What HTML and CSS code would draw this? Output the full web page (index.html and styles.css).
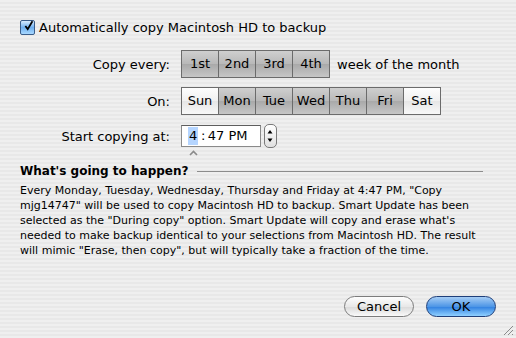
FILE: index.html
```html
<!DOCTYPE html>
<html lang="en">
<head>
  <meta charset="UTF-8" />
  <title>Backup Schedule</title>
  <link rel="stylesheet" href="styles.css">
</head>
<body>
  <div class="dialog">
    <label class="check-row">
      <span class="checkbox">
        <svg width="14" height="14" viewBox="0 0 14 14">
          <path d="M3 7 L6 11 L12 1" fill="none" stroke="#000" stroke-width="2.2"/>
        </svg>
      </span>
      Automatically copy Macintosh HD to backup
    </label>

    <div class="form">
      <div class="label">Copy every:</div>
      <div class="control">
        <div class="segments">
          <span class="seg on">1st</span>
          <span class="seg on">2nd</span>
          <span class="seg on">3rd</span>
          <span class="seg on">4th</span>
        </div>
        <span class="after">week of the month</span>
      </div>

      <div class="label">On:</div>
      <div class="control">
        <div class="segments">
          <span class="seg">Sun</span>
          <span class="seg on">Mon</span>
          <span class="seg on">Tue</span>
          <span class="seg on">Wed</span>
          <span class="seg on">Thu</span>
          <span class="seg on">Fri</span>
          <span class="seg">Sat</span>
        </div>
      </div>

      <div class="label">Start copying at:</div>
      <div class="control">
        <div class="time-wrap">
          <div class="time-field"><span class="hour">4</span>&thinsp;:&thinsp;47 PM</div>
          <svg class="caret" width="9" height="6" viewBox="0 0 9 6">
            <path d="M1 5 L4.5 1.5 L8 5" fill="none" stroke="#8a8a8a" stroke-width="1.6"/>
          </svg>
        </div>
        <div class="stepper">
          <svg width="12" height="22" viewBox="0 0 12 22">
            <path d="M6 5 L8.5 8.5 L3.5 8.5 Z" fill="#000"/>
            <path d="M6 17 L8.5 13.5 L3.5 13.5 Z" fill="#000"/>
          </svg>
        </div>
      </div>
    </div>

    <div class="section-head">
      <h2>What's going to happen?</h2>
      <span class="rule"></span>
    </div>

    <p class="summary">Every Monday, Tuesday, Wednesday, Thursday and Friday at 4:47 PM, "Copy mjg14747" will be used to copy Macintosh HD to backup. Smart Update has been selected as the "During copy" option. Smart Update will copy and erase what's needed to make backup identical to your selections from Macintosh HD. The result will mimic "Erase, then copy", but will typically take a fraction of the time.</p>

    <div class="buttons">
      <button class="btn">Cancel</button>
      <button class="btn default">OK</button>
    </div>

    <svg class="grip" width="12" height="12" viewBox="0 0 12 12">
      <path d="M11 2 L2 11 M11 6 L6 11 M11 10 L10 11" stroke="#8a8a8a" stroke-width="1"/>
    </svg>
  </div>
</body>
</html>
```

FILE: styles.css
```css
html, body {
  margin: 0;
  height: 100%;
}

body {
  font-family: "Lucida Grande", "DejaVu Sans", sans-serif;
  font-size: 13px;
  color: #000;
  background: repeating-linear-gradient(to bottom, #efefef 0 2px, #e8e8e8 2px 4px);
}

.dialog {
  position: relative;
  height: 338px;
  padding: 19px 20px 0;
  box-sizing: border-box;
}

.check-row {
  display: flex;
  align-items: center;
  gap: 4px;
  height: 16px;
}

.checkbox {
  width: 13px;
  height: 13px;
  border: 1px solid #3a5d8a;
  border-radius: 2px;
  background: linear-gradient(#d8ecff, #6fb0f0 50%, #a8d8ff);
  display: flex;
  align-items: center;
  justify-content: center;
}

.checkbox svg {
  margin-top: -3px;
  margin-left: 2px;
}

.form {
  display: grid;
  grid-template-columns: 150px auto;
  column-gap: 11px;
  row-gap: 9px;
  align-items: center;
  margin-top: 15px;
}

.label {
  text-align: right;
}

.control {
  display: flex;
  align-items: center;
  gap: 7px;
}

.segments {
  display: flex;
  border: 1px solid #6b6b6b;
  background: #6b6b6b;
  gap: 1px;
}

.seg {
  width: 36px;
  height: 26px;
  line-height: 26px;
  text-align: center;
  background: linear-gradient(#fdfdfd, #f0f0f0 50%, #e6e6e6 51%, #f8f8f8);
}

.seg.on {
  background: linear-gradient(#cfcfcf, #b8b8b8 50%, #a9a9a9 51%, #c6c6c6);
}

.time-wrap {
  position: relative;
}

.time-field {
  width: 72px;
  height: 20px;
  line-height: 20px;
  padding-left: 6px;
  border: 1px solid #8a8a8a;
  border-top-color: #5e5e5e;
  background: #fff;
}

.hour {
  display: inline-block;
  height: 18px;
  vertical-align: top;
  margin-top: 1px;
  line-height: 18px;
  background: #b5d5ff;
  padding: 0 1px;
}

.caret {
  position: absolute;
  left: 8px;
  top: 25px;
}

.stepper {
  width: 11px;
  height: 22px;
  border: 1px solid #7a7a7a;
  border-radius: 5px;
  background: linear-gradient(#fff, #e0e0e0);
  margin-left: -4px;
}

.stepper svg {
  display: block;
  margin-left: -1px;
}

.section-head {
  display: flex;
  align-items: center;
  gap: 8px;
  margin-top: 16px;
  margin-right: 13px;
}

.section-head h2 {
  margin: 0;
  font-size: 12px;
  font-weight: bold;
}

.rule {
  flex: 1;
  height: 1px;
  background: #8c8c8c;
}

.summary {
  margin: 5px 0 0;
  font-size: 11px;
  line-height: 15px;
}

.buttons {
  display: flex;
  justify-content: flex-end;
  gap: 12px;
  margin-top: 38px;
}

.btn {
  font-family: inherit;
  font-size: 13px;
  width: 70px;
  height: 21px;
  padding: 0;
  border: 1px solid #7c7c7c;
  border-radius: 11px;
  background: linear-gradient(#fdfdfd, #e8e8e8 50%, #d9d9d9 51%, #fafafa);
  color: #000;
}

.btn.default {
  border-color: #1f3f7a;
  background: linear-gradient(#a6cdf5, #4e96e6 50%, #2f7fe0 51%, #8fd0ff);
}

.grip {
  position: absolute;
  right: 2px;
  bottom: 2px;
}
```
